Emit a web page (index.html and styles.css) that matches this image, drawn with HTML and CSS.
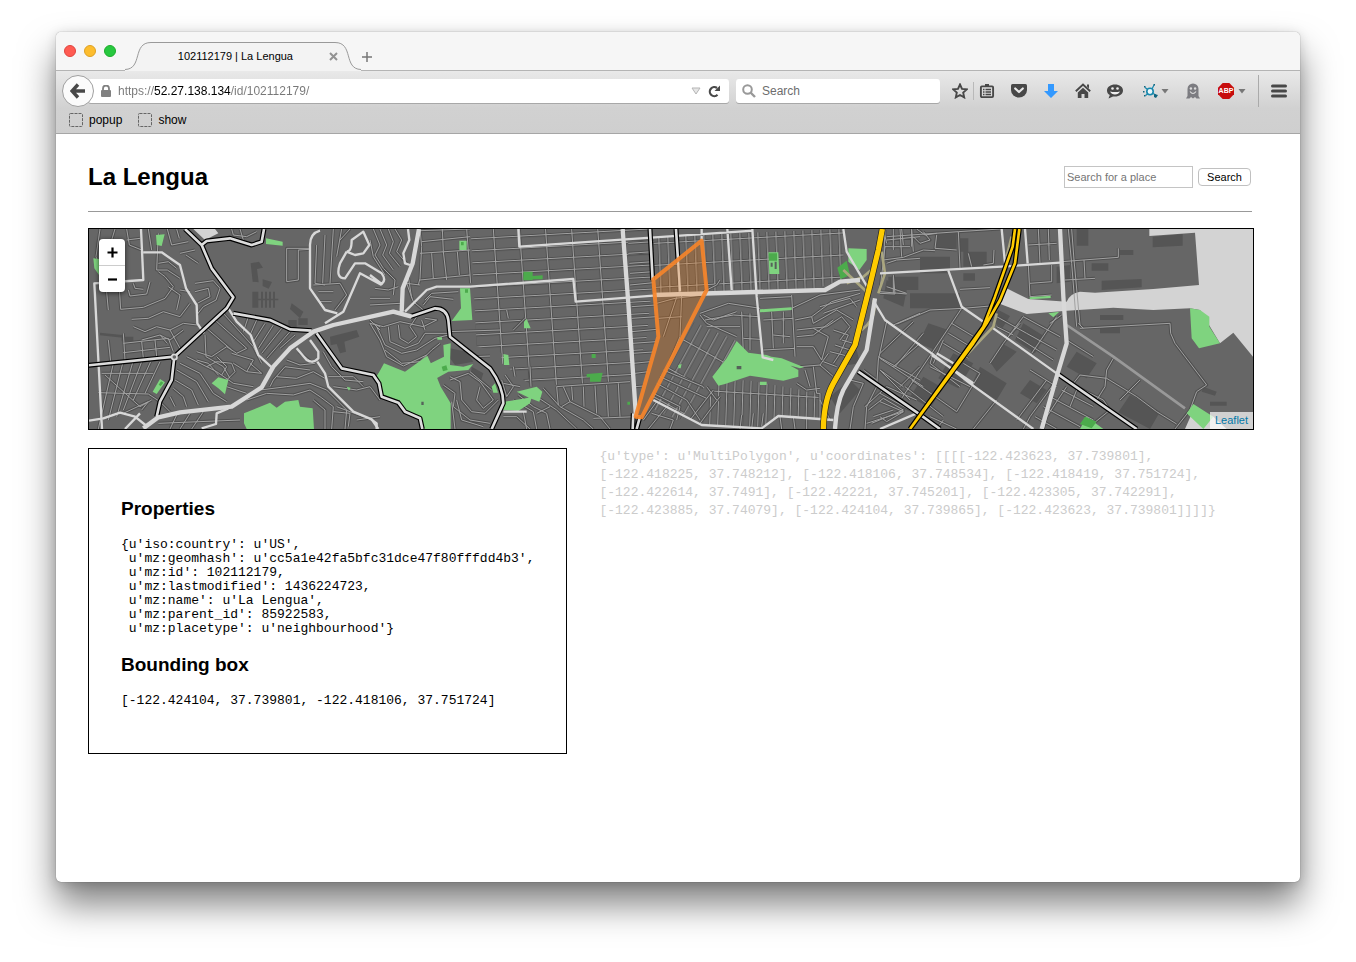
FILE: index.html
```html
<!DOCTYPE html>
<html lang="en">
<head>
<meta charset="utf-8">
<title>102112179 | La Lengua</title>
<link rel="stylesheet" href="styles.css">
</head>
<body>
<div class="window">
  <div class="tabstrip">
    <div class="lights"><button class="light red" aria-label="Close window"></button><button class="light amber" aria-label="Minimize"></button><button class="light green" aria-label="Full screen"></button></div>
    <div class="tab">
      <svg class="tab-shape" viewBox="0 0 236 30" preserveAspectRatio="none" aria-hidden="true"><path d="M0 29C18 29 7 1 26 1H210C229 1 218 29 236 29V30H0Z" fill="#f3f3f3"/><path d="M0 28.500C18 28 7 1.500 26 1.500H210C229 1.500 218 28 236 28.500" fill="none" stroke="#999"/></svg>
      <span class="tab-title">102112179 | La Lengua</span>
      <button class="tab-close" aria-label="Close tab"><svg width="9" height="9" viewBox="0 0 9 9"><path d="M1 1l7 7M8 1L1 8" stroke="#929292" stroke-width="2"/></svg></button>
    </div>
    <button class="new-tab" aria-label="New tab"><svg width="12" height="12" viewBox="0 0 12 12"><path d="M6 1v10M1 6h10" stroke="#777" stroke-width="1.500"/></svg></button>
  </div>

  <div class="chrome">
    <div class="navbar">
      <button class="back" aria-label="Back"><svg width="16" height="16" viewBox="0 0 16 16"><path d="M8 1.500L2 8l6 6.500M2.500 8H15" fill="none" stroke="#484848" stroke-width="3.400"/></svg></button>
      <div class="field url">
        <svg width="10" height="12" viewBox="0 0 10 12"><rect y="5" width="10" height="7" rx="1" fill="#808080"/><path d="M2 6V3.500a3 3 0 0 1 6 0V6" fill="none" stroke="#808080" stroke-width="1.800"/></svg>
        <input class="url-input" aria-label="Address" value="https://52.27.138.134/id/102112179/">
        <button aria-label="History"><svg width="10" height="8" viewBox="0 0 10 8"><path d="M1 1h8L5 7z" fill="#e6e6e6" stroke="#b5b5b5"/></svg></button>
        <button aria-label="Reload"><svg width="13" height="13" viewBox="0 0 13 13"><path d="M9.500 9.800A4.500 4.500 0 1 1 9 3" fill="none" stroke="#4a4a4a" stroke-width="2.200"/><path d="M12 .5V6H6.500z" fill="#4a4a4a"/></svg></button>
      </div>
      <div class="field finder">
        <svg width="14" height="14" viewBox="0 0 14 14"><circle cx="5.500" cy="5.500" r="4.300" fill="none" stroke="#999" stroke-width="2"/><path d="M8.500 8.500l4.500 4.500" stroke="#999" stroke-width="2.400"/></svg>
        <input aria-label="Web search" placeholder="Search">
      </div>
      <div class="tools">
        <button aria-label="Bookmark this page"><svg width="16" height="16" viewBox="0 0 16 16"><path d="M8 1.500l2 4.400 4.800.5-3.600 3.200 1 4.800L8 12l-4.200 2.400 1-4.800L1.200 6.400 6 5.900z" fill="none" stroke="#484848" stroke-width="1.900"/></svg></button>
        <span class="thin-rule"></span>
        <button aria-label="Bookmarks list"><svg width="16" height="16" viewBox="0 0 16 16"><path d="M6 3V1h4v2" fill="#484848"/><rect x="1.900" y="3.400" width="12.200" height="10.700" rx="1" fill="none" stroke="#484848" stroke-width="1.900"/><path d="M4 6.500h1.500M4 9h1.500M4 11.500h1.500M6.500 6.500H12M6.500 9H12M6.500 11.500H12" stroke="#484848" stroke-width="1.300"/></svg></button>
        <button aria-label="Pocket"><svg width="16" height="16" viewBox="0 0 16 16"><path d="M1.500 1h13Q16 1 16 2.500V7a8 7.500 0 0 1-16 0V2.500Q0 1 1.500 1z" fill="#484848"/><path d="M4.200 5.500L8 9l3.800-3.500" fill="none" stroke="#e8e8e8" stroke-width="2.200" stroke-linecap="round" stroke-linejoin="round"/></svg></button>
        <button aria-label="Downloads"><svg width="16" height="16" viewBox="0 0 16 16"><path d="M5 1h6v7h4l-7 7-7-7h4z" fill="#3399ff"/></svg></button>
        <button aria-label="Home"><svg width="16" height="16" viewBox="0 0 16 16"><path d="M.8 8.300L8 1.600l7.200 6.700" fill="none" stroke="#484848" stroke-width="1.900"/><path d="M12 1.500h2v4l-2-2zM8 4.700l5.200 4.800V15H9.500v-4h-3v4H2.800V9.500z" fill="#484848"/></svg></button>
        <button aria-label="Chat"><svg width="16" height="16" viewBox="0 0 16 16"><path d="M8 1.500c4.500 0 8 2.500 8 6s-3.500 6-8 6L6 13.400 1.500 15.500 2.800 12C1 11 0 9.500 0 7.500c0-3.500 3.500-6 8-6z" fill="#484848"/><circle cx="5.500" cy="5.500" r="1.300" fill="#eee"/><circle cx="10.500" cy="5.500" r="1.300" fill="#eee"/><path d="M3 8.500q5 1 10 0q-1.500 3-5 3t-5-3z" fill="#eee"/></svg></button>
        <button class="with-menu first-menu" aria-label="Molecule add-on"><svg width="16" height="16" viewBox="0 0 16 16"><circle cx="8" cy="8.500" r="3.200" fill="#e8f6fb" stroke="#1888ad" stroke-width="1.600"/><path d="M5 6L3 4.500M5.500 11l-2 1.500M10 6l2-4M11 10.500l3 1.500" stroke="#1888ad" stroke-width="1.200"/><path d="M2 3h1.500v1.500H2zM1 8h1.500v1.500H1zM2 12h1.500v1.500H2zM11.500 1H13v1.500h-1.500zM12 11l4 1-2 3-2-1z" fill="#11657f"/></svg><svg width="8" height="5" viewBox="0 0 8 5"><path d="M.5 0h7L4 4.500z" fill="#777"/></svg></button>
        <button class="ghost" aria-label="Ghostery"><svg width="16" height="16" viewBox="0 0 16 16"><path d="M2.500 13V6a5.500 5.500 0 0 1 11 0v7l1.500 2.500h-3.500L10 14l-2 1.500L6 14l-1.500 1.500H1z" fill="#7c7c81"/><circle cx="5.900" cy="5.500" r="1.200" fill="#ddd"/><circle cx="10.100" cy="5.500" r="1.200" fill="#ddd"/><path d="M5 8.500q3 4 6 0" fill="none" stroke="#ddd" stroke-width="1.200"/></svg></button>
        <button class="with-menu" aria-label="Adblock Plus"><span class="abp"><svg width="18" height="16" viewBox="0 0 18 16"><path d="M5.700 0h6.600L17 4.700v6.600L12.300 16H5.700L1 11.300V4.700z" fill="#c70d0d"/></svg><b>ABP</b></span><svg width="8" height="5" viewBox="0 0 8 5"><path d="M.5 0h7L4 4.500z" fill="#777"/></svg></button>
        <span class="tall-rule"></span>
        <button aria-label="Menu"><svg width="16" height="14" viewBox="0 0 16 14"><path d="M1.500 2h13M1.500 7h13M1.500 12h13" stroke="#484848" stroke-width="3" stroke-linecap="round"/></svg></button>
      </div>
    </div>
    <div class="bookmarks">
      <button><svg width="14" height="14" viewBox="0 0 14 14"><rect x=".5" y=".5" width="13" height="13" rx="1" fill="none" stroke="#666" stroke-dasharray="3 1"/></svg>popup</button>
      <button><svg width="14" height="14" viewBox="0 0 14 14"><rect x=".5" y=".5" width="13" height="13" rx="1" fill="none" stroke="#666" stroke-dasharray="3 1"/></svg>show</button>
    </div>
  </div>

  <main class="page">
    <header class="page-head">
      <h1>La Lengua</h1>
      <form class="place-search"><input type="text" aria-label="Search for a place" placeholder="Search for a place"><button type="button">Search</button></form>
    </header>

    <div class="map">
      <svg class="map-canvas" viewBox="27 27 3492 600" preserveAspectRatio="xMidYMid slice" role="img" aria-label="Map of La Lengua, San Francisco">
        <defs>
          <pattern id="blocks" width="78" height="36" patternUnits="userSpaceOnUse" patternTransform="matrix(1 -.055 .07 1 1121 5)"><path d="M0 18H78M39 0V36" class="casing"/><path d="M0 18H78M39 0V36" class="street"/></pattern>
          <pattern id="narrow" width="27" height="66" patternUnits="userSpaceOnUse" patternTransform="matrix(1 -.055 .04 1 1885 28)"><path d="M0 33H27M13 0V66" class="casing"/><path d="M0 33H27M13 0V66" class="street"/></pattern>
          <pattern id="slant" width="27" height="96" patternUnits="userSpaceOnUse" patternTransform="matrix(.9 .5 -.48 .88 1820 310)"><path d="M0 48H27M13 0V96" class="casing"/><path d="M0 48H27M13 0V96" class="street"/></pattern>
          <pattern id="rows" width="24" height="120" patternUnits="userSpaceOnUse" patternTransform="matrix(1 .06 -.03 1 1930 455)"><path d="M0 60H24M12 0V120" class="casing"/><path d="M0 60H24M12 0V120" class="street"/></pattern>
          <g id="streets">
            <path d="M60 27L48 110L75 180M78 195L85 270M118 205L122 268L190 262L255 235L280 200L255 170L235 155M105 27L95 60M140 27L148 75L185 90M140 60L180 55M205 27L215 90M235 40L230 150L262 150L300 175M262 27L275 75L325 65M290 27L298 55M300 100L345 90M318 105L355 130M345 190L400 182L420 205L408 240L370 260L350 285M345 215L385 205L390 230L352 250M235 130L265 125L290 145M145 210L150 228L200 222L210 185M160 190L165 205L190 208M155 298L205 295L250 275L300 290L330 250M160 320L195 335L230 320L270 330L310 310L352 315M185 360L240 345L270 360L310 330M130 370L265 355L280 395M130 398L270 382M265 200L300 225L290 270M300 210L330 215M85 360L92 425M130 340L135 420M225 360L230 410M185 365L190 415M270 330L300 385M240 345L262 370"/>
            <path d="M405 300L500 385L470 400L440 380L395 410L350 395M380 325L455 390M430 280L520 380L545 430M375 345L378 410L430 440L450 475M350 420L385 430L415 465M380 440L410 425L455 430L465 455L440 480M410 410L440 440L425 465M455 400L520 420L500 455L460 430M500 455L545 460L510 430M505 290L490 335M530 300L510 345M555 310L520 365M580 315L535 385M605 325L545 400M630 335L560 415M645 345L600 385M300 430L360 460L400 520L440 545M290 450L350 485L385 545M285 480L335 510L355 555M280 505L310 530L320 560M270 530L285 560M320 410L410 455M410 455L460 490L520 500M440 500L500 520M100 430L55 627M128 430L85 600M158 428L110 590M185 425L130 570M212 425L160 540M240 425L195 520M65 460L220 460M55 518L205 522L240 545L270 575M75 465L180 560L215 540M130 580L205 545L185 570"/>
            <path d="M290 585L270 627M330 580L300 627M370 575L335 627M235 610L480 600M500 540L560 520L640 525L690 510L720 530L760 560L755 627M540 510L620 500L690 490L740 510L800 570L795 627M590 470L650 475L700 455L735 475M570 500L580 480L615 440L690 450M620 420L660 435L705 430M700 540L735 570L735 627M760 500L830 510L870 500L900 540M745 470L820 470L850 500M760 575L810 580L805 620M770 560L850 590M830 600L900 590M655 395L700 430M730 395L755 440L795 480L850 485M690 85L620 85L620 185L655 180L655 90L690 88M710 75L705 190L735 195M735 45L728 190M760 27L750 190M700 195L780 190L800 225L765 270M715 215L760 215M715 245L755 245M785 27L770 110M810 27L780 60M455 27L460 45L500 50L530 35M480 27L490 60M870 300L900 330M880 310L900 320"/>
            <g transform="translate(870 0)">
              <path d="M10 27L30 75L15 105L40 145L75 180L70 225M30 27L50 75L38 105L70 150M55 27L70 65L58 100L90 140M75 27L95 60L80 95L110 130M0 60L10 110L45 165M15 205L55 210L85 200M0 235L60 235M0 255L90 250M150 27L155 80L150 175L145 195M150 100L300 90M155 65L300 50M150 32L300 27M217 27L220 95L230 180M290 27L302 190M185 100L190 175M262 95L268 165M150 180L300 165M115 170L125 235M150 195L110 190L130 245L160 270M160 255L180 230L250 238M165 240L185 220L265 215M0 310L40 320L90 305L160 320L200 300L165 295M20 320L45 375L95 400L140 390L195 355L235 345M85 315L90 355L115 370L140 350L120 320L140 290M55 320L60 365L105 385L145 370L165 340L235 340M45 390L95 430L150 425L185 390L210 370M0 310L30 360L50 410L100 438L170 405M155 300L165 330M235 335L390 330M310 410L360 408M240 470L270 485L275 540L305 575L345 580L385 540M240 480L295 460L330 485L370 540L340 565L320 540L330 500M220 495L255 520L250 560L300 600L360 610M300 455L365 510M260 540L275 600L340 620M245 545L255 627M405 465L430 500L410 530L395 480M400 490L450 500M520 505L570 560L640 600L670 627M500 530L560 570L620 627M445 525L490 560L530 580L540 627M430 540L490 575L500 627M460 575L470 627M400 590L440 590L480 627M500 580L540 560M410 270L415 295M430 330L465 295M480 440L483 500M430 440L435 470M575 560L600 545L690 590L720 627M600 545L580 500M670 595L800 590M560 500L565 555"/>
              <path d="M560 500L600 497L780 485M605 500L608 540M640 500L642 560M675 497L680 580M710 495L715 590M745 490L750 590"/>
            </g>
            <g transform="translate(1620 0)">
              <path d="M25 70L100 65M25 100L100 95M28 130L100 125M30 160L100 155M30 195L100 188M35 260L105 255M35 295L110 290M35 335L110 328M38 370L108 365M38 400L98 396M40 430L90 425M45 460L85 455M45 500L70 498M110 250L165 235L250 225M170 232L130 350M115 295L185 290M185 225L180 350L130 470M240 285L260 310L350 350M240 280L325 250L420 265M255 300L340 285L415 290M260 320L360 320M250 285L280 300L350 275M250 215L290 195L300 180M365 275L370 400M390 280L390 390M370 355L420 358M420 235L515 230M455 275L460 385M490 275L490 370M430 300L520 295M430 390L525 385M460 345L510 350M515 225L525 410M515 265L600 225L720 210M525 300L575 290L635 245L720 220M575 290L580 310L650 270L700 300M530 330L620 320L665 290L690 320L660 360M580 325L625 350L605 420L580 380L530 380M530 350L580 345L640 300M600 260L690 235L710 260M610 280L720 240M640 330L685 345L660 400L640 430M665 360L700 370M645 375L690 390M630 395L690 410M540 440L600 435L625 400M555 450L570 500M580 440L590 520L600 520M600 435L640 470M610 425L650 440M530 490L560 510L600 505"/>
              <path d="M70 600L110 545M95 580L160 600L150 627M85 627L140 560M110 490L200 540L240 600M100 520L180 560L170 600M130 450L250 500M120 470L260 535M210 600L280 510M240 610L300 530M260 500L290 540M360 627L365 585M395 627L400 580M425 620L430 580M480 590L485 627M520 590L525 627M560 595L560 627M600 520L600 600"/>
              <path d="M795 80L780 210M800 130L830 120L900 115M800 200L860 220M820 170L820 220M780 215L860 222M800 305L775 420L770 500L740 560L735 627M820 315L900 280M775 410L900 480M780 450L850 500M820 440L900 370M840 500L900 440M690 480L730 490L700 560L690 627M730 450L770 480M735 560L800 500L890 540M745 570L790 535L850 570L755 610M740 610L850 575M760 590L820 570M780 500L860 560M790 27L800 70M820 27L820 90M845 27L850 75M875 27L875 80M800 60L900 50M630 600L600 540"/>
            </g>
            <g transform="translate(2400 0)">
              <path d="M10 120L70 112L130 90L165 92M20 50L165 40L235 35L360 27M60 27L65 110M95 30L100 95M130 35L150 60L120 70L100 50M235 35L240 145M170 45L165 85L230 90M15 80L90 80M15 30L10 150M265 100L275 140M310 135L340 130L342 90M40 165L45 222L0 220M240 208L330 203M50 312L150 270L250 265L330 258M110 27L135 45L170 40M445 75L530 70M475 27L480 130M505 27L508 120M445 135L450 230L515 225M450 190L515 185L515 135M545 125L715 112L715 85M555 180L645 175M612 120L615 175M565 27L575 130L590 320M575 27L582 120L600 315M600 325L870 310L872 340L885 370L980 495L950 515L930 570L885 627M595 310L610 325"/>
              <path d="M245 265L65 535M215 310L290 355M205 340L280 385M190 370L265 415M160 400L150 430L240 500M100 305L0 400M45 440L130 340M0 415L130 500M0 450L90 540M75 500L190 590M95 480L230 575L300 460L250 430M150 440L270 500M190 360L160 430M350 290L440 340L530 390M430 290L370 370L330 430M455 400L530 290M350 320L400 345M385 350L420 310M430 290L540 350M545 285L510 310M410 350L520 420M560 360L640 410M600 465L680 475L770 530L830 575L890 612M600 465L580 490M700 415L680 450L675 500L650 540M780 480L720 540M530 480L450 590L430 627M560 500L500 590L490 627M510 530L640 600M545 510L640 560M590 510L570 560M590 500L670 540L690 570L620 627M490 560L600 620M465 590L530 627M500 480L410 600M350 540L280 627M60 535L110 575M150 590L230 627M0 545L70 575L20 605L0 590M0 520L90 570M190 600L170 627M450 450L530 500"/>
            </g>
          </g>
          <g id="arterials">
            <path d="M315 27L365 75L395 145L460 232L440 265L283 410L25 436M365 75L380 63L450 55L515 75L545 65L552 27M460 280L570 300L630 328L695 332M283 410L275 480L240 545L230 590M710 340L785 445L880 465L897 490L905 530L955 548L975 575L1020 595L1027 627"/>
            <path d="M990 290L1065 265Q1100 265 1105 300L1110 350L1160 390L1230 445Q1270 500 1270 550L1235 627"/>
            <path d="M1710 27L1718 180M1788 27L1794 120M1680 590L1670 627M1660 580L1658 627"/>
            <path d="M2335 455L2515 580L2580 627M2930 460L3170 627"/>
          </g>
          <g id="freeway"><path d="M2407 27L2395 90L2365 215L2325 375L2260 490Q2232 540 2230 627"/></g>
          <g id="freeway-split"><path d="M2805 27L2798 80L2775 145L2745 230L2710 320L2490 627M2818 27L2805 130L2760 240L2720 310L2680 370L2490 627"/></g>
        </defs>
        <rect x="0" y="0" width="3600" height="660" fill="#666"/>
        <g class="buildings">
          <path d="M512 130l25-5 12 18-18 4 5 40-18-2zM548 178l28 8-10 20-18-8zM517 215h18v48h-18zM543 215h6v48h-6zM555 215h6v48h-6zM567 215h6v48h-6zM579 215h6v48h-6zM535 236h60v5h-60zM635 250l35 25-10 20-30-28zM625 300h25v22h-25zM655 295h28v20h-28zM750 350l80-20 8 20-45 15 5 30-18 5-10-28-18 4zM60 338l75 8v8l-75-8zM125 350h35v14h-35z"/>
          <path d="M1110 385l50 10 20 30-55 10-15-20zM1175 440l35 20-8 25-30-20zM2420 180l60 30-10 50-60-25zM2300 400l30-10 10 40-35 5z"/>
          <path d="M2425 170h90v40h-90zM2520 110h90v50h-90zM2640 55h25v40h-25zM2570 40h60v45h-60zM2650 95h70v45h-70zM2490 220h150v45h-150zM2650 160h35v22h-35zM2755 270l35 18-22 35-38-20zM2930 140l40-5v50l-40 5zM2990 27h35v50h-35zM3218 50l90-8v35l-90 5zM3065 182l120-5v25l-120 8zM3035 130h50v22h-50zM3120 90h40v15h-40zM2545 310l60 20-40 60-50-20zM2620 400l60 30-45 75-60-30zM2530 470l60 35-40 60-60-35zM2765 370l45 25-60 60-20-30zM2700 440l80 50-30 50-75-45zM2830 310l65 40-30 50-60-40zM2990 395l60 35-30 45-60-35zM3150 525l90 50-30 52-95-50zM3060 285h70v15h-70zM3060 320h60v20h-60zM3370 500l40 15-5 12-40-12zM3390 545h50v12h-50zM2850 480l50 30-30 40-50-30zM2250 530l60-50 30 30-60 70z"/>
        </g>
        <path d="M1172 27L1710 27L1718 180L1700 350L1660 488L1390 495L1360 500L1265 430L1265 400L1190 378Z" fill="url(#blocks)"/>
        <path d="M1720 50L2290 27L2290 180L2200 208L1725 220Z" fill="url(#narrow)"/>
        <path d="M1840 305L1975 365L1905 460L1860 520L1800 600L1700 560Z" fill="url(#slant)"/>
        <path d="M1905 490L2000 480L2220 520L2220 595L2100 588L2050 620L1860 615Z" fill="url(#rows)"/>
        <use href="#streets" class="casing"/>
        <path class="water" d="M3208 20L3208 48L3345 38L3357 195L3220 207L3045 218L3000 215Q2970 220 2960 245L2845 237L2780 205L2755 250L2840 282L2960 272L3100 263L3220 270L3330 265L3360 270L3420 370L3460 338L3535 430V20ZM3340 570L3400 590L3440 627H3315ZM340 27L375 60L415 40L405 27Z"/>
        <use href="#streets" class="street"/>
        <g class="park">
          <path d="M492 580L570 548L590 563L615 545L655 540L660 560L698 565L702 627H500L492 610ZM395 490L415 472L445 480L435 523L415 505ZM240 477L255 487L230 522L218 515ZM228 45L254 43L245 78L230 75ZM40 115L57 117V165L43 145ZM558 55L608 65V77L558 72ZM800 500L812 503 807 512zM885 475L910 440L900 490Z"/>
          <path d="M890 470L912 430L975 455L1042 407L1062 450L1082 500L1112 550V627H1033L1025 597L975 575L950 545L905 525ZM1052 430L1092 410L1090 375L1112 370L1110 435L1150 440L1180 432L1165 450L1105 455L1070 475ZM1140 205L1170 205L1177 300L1115 303L1143 265ZM1138 62h22v28h-22zM1332 305L1340 297L1352 325H1332ZM1270 402L1285 405L1288 435H1272ZM1270 570L1275 545L1355 532L1350 550L1315 573ZM1310 515L1370 500L1387 515L1378 545L1350 535ZM1235 500L1245 490L1254 518H1240ZM1072 352h14v7h-14z"/>
          <path d="M2065 97h30l3 65h-30zM2305 85L2360 87L2360 120L2338 150L2305 125ZM2040 268L2135 262V270L2040 277ZM1940 415L1970 363L2005 398L2060 405L2100 420L2155 450L2155 470L2110 482L2010 467L1935 492L1915 497L1897 470ZM2060 408L2105 415L2172 442L2160 445L2100 428ZM2040 485h20v10h-20zM1795 435L1805 432 1802 445H1795z"/>
          <path d="M3330 265L3360 270L3388 290L3388 320L3420 370L3357 385L3335 355ZM2848 232L2912 227V234L2850 238ZM2905 280L2938 275L2920 292ZM3340 552L3400 590L3370 627L3320 580ZM3020 590L3070 627H3000Z"/>
        </g>
        <path class="park-dark" d="M1330 155h28v26h-28zM1358 168l30-2v12h-30zM1520 462L1568 458L1562 485H1530V472H1520ZM1535 402h12v12h-12zM1642 545h8v9h-8zM2067 100h24v22h-24zM2272 143L2300 122L2310 165L2282 178ZM1085 440l14-4 4 14-14 4zM1143 66h8v10h-8zM1155 208h9v10h-9zM3015 590L3050 605L3035 625L3000 612ZM243 484l7 4-8 10-6-4z"/>
        <path d="M1970 438h14v10h-14zM1024 545h7v10h-7zM2072 128h6v12h-6zM2084 125h6v22h-6z" fill="#56625a"/>
        <path d="M2290 150L2365 220M2300 190L2350 170L2380 145M2405 95L2415 160L2395 220M2380 240Q2395 290 2345 330M2795 50L2780 110M2750 280L2740 320L2655 410" class="ramp"/>
        <g class="local">
          <path d="M183 27L190 180L43 190L66 627M190 97L245 97L300 135L318 205L350 255L352 310L372 340M27 602L70 595L120 578L165 590L200 618M135 627L180 580M445 265L470 305L512 345L535 405L575 442M650 385L680 420Q700 432 715 415L715 395L690 360M712 425L735 460L745 500L820 575L875 598L895 627M445 565L410 580L408 612L365 625"/>
          <path d="M720 32Q690 40 690 75L690 205L735 270L772 280M800 95L780 130Q765 175 795 175L825 130L855 130L905 160Q920 180 905 192L870 165M800 95L825 105L850 100L868 75L850 35L815 60Q815 95 800 95M735 310L790 275L840 160L905 195M984 27L988 60L970 100L975 130L990 135"/>
          <path d="M975 275L1040 210L1070 200L1170 200L1480 177L1487 245L1720 227M1315 27L1318 80L2020 32M1794 120L1800 215M1865 27L1865 60M1942 27L1955 210M2017 27L2030 230L2048 412L2080 420M1720 540L1865 615L2045 625L2095 588L2260 600M2290 27L2300 95L2370 215M2400 160L2765 140L2940 128M2605 152L2645 260L2710 305M2740 325L2930 460M2385 250L2415 300L2555 400L2670 490L2860 627M2555 405L2680 490M2570 400L2620 430M2765 27L2775 130M2835 27L2843 130M1270 575H1340M870 595L890 610V627M2400 627L2510 580"/>
        </g>
        <path class="gray-road" d="M2960 315L3100 410L3315 565"/>
        <use href="#arterials" class="arterial-case"/>
        <use href="#arterials" class="arterial"/>
        <g class="main-road">
          <path d="M190 625L235 592L300 577L455 560L545 502L580 440L630 385L700 335L760 315L940 275L995 290M1017 27L998 130L968 205L965 275" stroke-width="13"/>
          <path d="M1628 27L1645 250L1668 590M1720 225L2235 210L2280 185L2340 180M2940 27L2950 230L2960 370L2930 470L2885 627M2385 235L2360 390L2290 510Q2270 550 2265 627" stroke-width="13"/>
        </g>
        <circle cx="283" cy="411" r="8" fill="#666" stroke="#d8d8d8" stroke-width="5"/>
        <use href="#freeway" class="freeway-case"/><use href="#freeway" class="freeway"/>
        <use href="#freeway-split" class="split-case"/><use href="#freeway-split" class="split"/>
        <path class="boundary" d="M1720 178L1865 62L1880 210L1685 592L1667 590L1735 350Z"/>
      </svg>
      <div class="zoom"><button aria-label="Zoom in"><svg width="12" height="12" viewBox="0 0 12 12"><path d="M6.500 1.500v10M1.500 6.500h10" stroke="#000" stroke-width="2.200"/></svg></button><button aria-label="Zoom out"><svg width="12" height="12" viewBox="0 0 12 12"><path d="M2 6.500h9" stroke="#000" stroke-width="2.200"/></svg></button></div>
      <div class="credit"><a href="#">Leaflet</a></div>
    </div>

    <div class="details">
      <section class="facts">
        <h3>Properties</h3>
<pre>{u'iso:country': u'US',
 u'mz:geomhash': u'cc5a1e42fa5bfc31dce47f80fffdd4b3',
 u'mz:id': 102112179,
 u'mz:lastmodified': 1436224723,
 u'mz:name': u'La Lengua',
 u'mz:parent_id': 85922583,
 u'mz:placetype': u'neighbourhood'}</pre>
        <h3>Bounding box</h3>
<pre>[-122.424104, 37.739801, -122.418106, 37.751724]</pre>
      </section>
      <code class="geometry">{u'type': u'MultiPolygon', u'coordinates': [[[[-122.423623, 37.739801], [-122.418225, 37.748212], [-122.418106, 37.748534], [-122.418419, 37.751724], [-122.422614, 37.7491], [-122.42221, 37.745201], [-122.423305, 37.742291], [-122.423885, 37.74079], [-122.424104, 37.739865], [-122.423623, 37.739801]]]]}</code>
    </div>
  </main>
</div>
</body>
</html>
```
FILE: styles.css
```css
* { box-sizing: border-box; }
body { margin: 0; background: #fff; font-family: "Liberation Sans", Arial, sans-serif; color: #000; }
button { border: 0; padding: 0; background: none; font: inherit; color: inherit; display: flex; align-items: center; justify-content: center; }
input { font: inherit; min-width: 0; }
svg { display: block; flex: none; }

.window {
  display: flex; flex-direction: column;
  min-height: calc(100vh - 112px);
  margin: 32px 56px 80px;
  border-radius: 5px; background: #fff; overflow: hidden;
  box-shadow: 0 0 1px rgba(0,0,0,.6), 0 22px 36px rgba(0,0,0,.5), 0 2px 12px rgba(0,0,0,.15);
}

/* tab strip */
.tabstrip { display: flex; align-items: flex-end; height: 39px; background: #f6f6f6; border-bottom: 1px solid #b4b4b4; }
.lights { display: flex; gap: 8px; align-self: center; padding-left: 8px; }
.light { width: 12px; height: 12px; border-radius: 50%; border: 1px solid; }
.red { background: #ff5b52; border-color: #e0443e; }
.amber { background: #fdbd2e; border-color: #dea123; }
.green { background: #27c83f; border-color: #1dad2b; }
.tab { position: relative; display: flex; align-items: center; justify-content: flex-end; width: 236px; height: 30px; margin: 0 0 -1px 9px; padding-right: 23px; gap: 36px; font-size: 11px; }
.tab-shape { position: absolute; inset: 0; width: 100%; height: 100%; }
.tab-title, .tab-close { position: relative; }
.new-tab { height: 26px; }

/* toolbars */
.chrome { background: linear-gradient(#e9e9e9, #d1d1d1 60%, #cfcfcf); border-bottom: 1px solid #a6a6a6; font-size: 12px; }
.navbar { display: flex; align-items: center; height: 40px; padding: 0 13px 0 6px; }
.back { position: relative; width: 32px; height: 32px; border-radius: 50%; background: #fbfbfb; border: 1px solid #a0a0a0; flex: none; }
.field { display: flex; align-items: center; height: 24px; background: #fff; border-radius: 3px; box-shadow: 0 1px 0 #a8a8a8; }
.field input { flex: 1; border: 0; padding: 0; outline: 0; background: none; color: #777; }
.field input::placeholder { color: #6d6d6d; opacity: 1; }
.url { flex: 1; margin-left: -6px; padding: 0 8px 0 13px; gap: 7px; }
.field .url-input { color: transparent; background: linear-gradient(90deg, #777 36px, #000 36px, #000 113px, #777 113px) text; }
.finder { width: 204px; margin-left: 7px; padding: 0 6px; gap: 6px; }
.tools { display: flex; align-items: center; gap: 16px; margin-left: 12px; }
.thin-rule { width: 1px; height: 18px; margin: 0 -11px; background: #b9b9b9; }
.tall-rule { width: 1px; height: 32px; margin: 0 -4px; background: #aaa; }
.with-menu { gap: 3px; }
.first-menu { margin-left: 3px; }
.abp { position: relative; display: block; }
.abp b { position: absolute; inset: 0; font-size: 7px; line-height: 16px; text-align: center; color: #fff; }
.bookmarks { display: flex; gap: 16px; height: 22px; padding: 0 13px; }
.bookmarks button { gap: 6px; height: 18px; }

/* page */
.page { flex: 1; padding: 29px 48px 32px 32px; }
.page-head { display: flex; align-items: center; justify-content: space-between; padding-bottom: 20px; border-bottom: 1px solid #999; }
h1 { margin: 0; font-size: 24px; line-height: 28px; }
.place-search { display: flex; align-items: center; gap: 5px; font-size: 11px; }
.place-search input { width: 129px; height: 22px; padding: 0 2px; border: 1px solid #c4c4c4; }
.place-search input::placeholder { color: #757575; }
.place-search button { width: 53px; height: 18px; margin-right: 1px; border: 1px solid #c0c0c0; border-radius: 4px; background: #fff; }

.map { position: relative; height: 202px; margin: 16px -2px 18px 0; border: 1px solid #000; overflow: hidden; background: #666; }
.map-canvas { width: 100%; height: 100%; }
.map-canvas path, .map-canvas use { stroke-linejoin: round; }
.casing { fill: none; stroke: #4f4f4f; stroke-width: 9px; }
.street { fill: none; stroke: #a2a2a2; stroke-width: 3px; }
.buildings { fill: #555; }
.water { fill: #d3d3d3; }
.park { fill: #7fd37f; }
.park-dark { fill: #4cab4c; }
.ramp { fill: none; stroke: #aaa67f; stroke-width: 8px; }
.local { fill: none; stroke: #d8d8d8; stroke-width: 7px; }
.gray-road { fill: none; stroke: #999; stroke-width: 8px; }
.main-road { fill: none; stroke: #d8d8d8; }
.arterial-case { fill: none; stroke: #000; stroke-width: 15px; }
.arterial { fill: none; stroke: #dcdcdc; stroke-width: 8px; }
.freeway-case { fill: none; stroke: #222; stroke-width: 20px; }
.freeway { fill: none; stroke: #fc0; stroke-width: 16px; }
.split-case { fill: none; stroke: #000; stroke-width: 15px; }
.split { fill: none; stroke: #fc0; stroke-width: 8px; }
.boundary { fill: #ff7800; fill-opacity: .25; stroke: #f5842a; stroke-opacity: .92; stroke-width: 12px; }

.zoom { position: absolute; top: 10px; left: 10px; width: 26px; border-radius: 4px; background: #fff; box-shadow: 0 1px 5px rgba(0,0,0,.65); }
.zoom button { width: 26px; height: 26px; }
.zoom button:first-child { height: 27px; border-bottom: 1px solid #ccc; }
.credit { position: absolute; right: 0; bottom: 0; padding: 0 5px; background: rgba(255,255,255,.7); font-size: 11px; line-height: 17px; }
.credit a { color: #0078a8; text-decoration: none; }

.details { display: grid; grid-template-columns: max-content 1fr; gap: 32px; align-items: start; }
.facts { padding: 31px 32px; border: 1px solid #000; }
h3 { margin: 18px 0; font-size: 19px; line-height: 22px; }
pre, .geometry { font-family: "Liberation Mono", "Courier New", monospace; font-size: 13px; }
pre { margin: 0 0 14px; line-height: 14px; }
.geometry { line-height: 18px; color: #ccc; }
```
